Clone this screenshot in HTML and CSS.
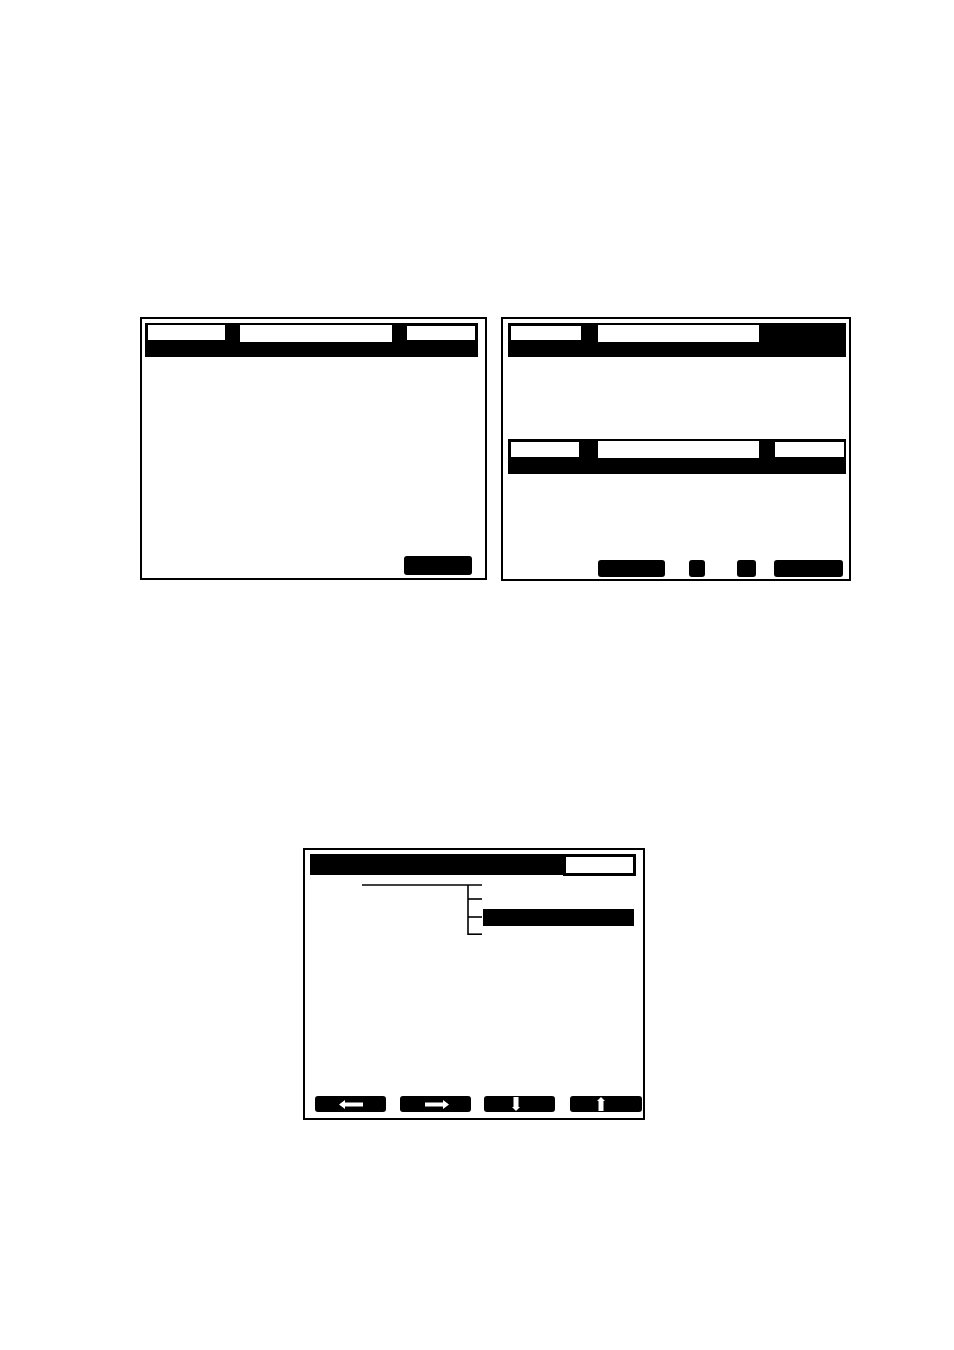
FILE: index.html
```html
<!DOCTYPE html>
<html>
<head>
<meta charset="utf-8">
<title>Screens</title>
<link rel="stylesheet" href="styles.css">
</head>
<body>
<div class="page">
  <div class="top-row">
    <div class="panel panel-a">
      <div class="hdr hdr-a">
        <div class="hrow">
          <div class="wbox a1"></div>
          <div class="wbox a2"></div>
          <div class="wbox a3"></div>
        </div>
      </div>
      <div class="foot foot-a">
        <div class="btn btn-a"></div>
      </div>
    </div>
    <div class="panel panel-b">
      <div class="hdr hdr-b1">
        <div class="hrow">
          <div class="wbox b1"></div>
          <div class="wbox b2"></div>
        </div>
      </div>
      <div class="hdr hdr-b2">
        <div class="hrow">
          <div class="wbox c1"></div>
          <div class="wbox c2"></div>
          <div class="wbox c3"></div>
        </div>
      </div>
      <div class="foot foot-b">
        <div class="btn bb1"></div>
        <div class="btn bb2"></div>
        <div class="btn bb3"></div>
        <div class="btn bb4"></div>
      </div>
    </div>
  </div>

  <div class="panel panel-c">
    <div class="hdr-c">
      <div class="bar-c"></div>
      <div class="box-c"></div>
    </div>
    <div class="tree">
      <svg class="tree-lines" width="121" height="52" viewBox="0 0 121 52">
        <g stroke="#000" stroke-width="1.6" fill="none">
          <line x1="0" y1="1" x2="120" y2="1"/>
          <line x1="106" y1="1" x2="106" y2="51"/>
          <line x1="106" y1="15" x2="120" y2="15"/>
          <line x1="106" y1="33" x2="120" y2="33"/>
          <line x1="106" y1="50.2" x2="120" y2="50.2"/>
        </g>
      </svg>
      <div class="sel"></div>
    </div>
    <div class="foot foot-c">
      <div class="btn cb cb1">
        <svg width="24" height="9" viewBox="0 0 24 9"><polygon points="0,4.5 6,0 6,2.5 24,2.5 24,6.5 6,6.5 6,9" fill="#fff"/></svg>
      </div>
      <div class="btn cb cb2">
        <svg width="24" height="9" viewBox="0 0 24 9"><polygon points="24,4.5 18,0 18,2.5 0,2.5 0,6.5 18,6.5 18,9" fill="#fff"/></svg>
      </div>
      <div class="btn cb cb3">
        <svg width="8" height="14" viewBox="0 0 8 14"><polygon points="1.5,0 6.5,0 6.5,10 8,10 4,14 0,10 1.5,10" fill="#fff"/></svg>
      </div>
      <div class="btn cb cb4">
        <svg width="8" height="14" viewBox="0 0 8 14"><polygon points="4,0 8,4 6.5,4 6.5,14 1.5,14 1.5,4 0,4" fill="#fff"/></svg>
      </div>
    </div>
  </div>
</div>
</body>
</html>
```

FILE: styles.css
```css
* { box-sizing: border-box; }

html, body {
  margin: 0;
  padding: 0;
  background: #fff;
  font-family: "Liberation Sans", Arial, sans-serif;
}

.page {
  width: 954px;
  height: 1350px;
  padding-top: 317px;
}

.top-row {
  display: flex;
  margin-left: 140px;
  gap: 14px;
}

.panel {
  border: 2px solid #000;
  background: #fff;
  display: flex;
  flex-direction: column;
}

/* ---- Panel A ---- */
.panel-a {
  width: 347px;
  height: 263px;
  padding: 4px 7px 3px 3px;
}

.hdr {
  background: #000;
}

.hrow {
  display: flex;
  align-items: flex-start;
}

.wbox {
  background: #fff;
  flex: none;
}

.hdr-a { height: 34px; }
.hdr-a .hrow { height: 19px; }
.a1 { margin-left: 3px; margin-top: 2px; width: 77px; height: 15px; }
.a2 { margin-left: 15px; margin-top: 2px; width: 152px; height: 17px; }
.a3 { margin-left: 15px; margin-top: 3px; width: 68px; height: 14px; }

.foot {
  margin-top: auto;
  display: flex;
  justify-content: flex-end;
  align-items: flex-end;
}

.btn {
  background: #000;
  border-radius: 3px;
  flex: none;
}

.btn-a {
  width: 68px;
  height: 19px;
  margin-right: 6px;
}

/* ---- Panel B ---- */
.panel-b {
  width: 350px;
  height: 264px;
  padding: 4px 3px 2px 5px;
}

.hdr-b1 { height: 34px; }
.hdr-b1 .hrow { height: 19px; }
.b1 { margin-left: 3px; margin-top: 3px; width: 70px; height: 14px; }
.b2 { margin-left: 17px; margin-top: 2px; width: 161px; height: 17px; }

.hdr-b2 { height: 35px; margin-top: 82px; }
.hdr-b2 .hrow { height: 19px; }
.c1 { margin-left: 3px; margin-top: 3px; width: 68px; height: 15px; }
.c2 { margin-left: 19px; margin-top: 2px; width: 161px; height: 17px; }
.c3 { margin-left: 16px; margin-top: 3px; width: 69px; height: 15px; }

.foot-b { padding-right: 3px; }
.bb1 { width: 67px; height: 17px; }
.bb2 { width: 16px; height: 17px; margin-left: 24px; }
.bb3 { width: 19px; height: 17px; margin-left: 32px; }
.bb4 { width: 69px; height: 17px; margin-left: 18px; }

/* ---- Panel C ---- */
.panel-c {
  margin-top: 267px;
  margin-left: 303px;
  width: 342px;
  height: 272px;
  padding: 4px 1px 6px 5px;
}

.hdr-c {
  display: flex;
  align-items: flex-start;
  margin-right: 6px;
  height: 22px;
}

.bar-c {
  flex: 1;
  height: 21px;
  background: #000;
}

.box-c {
  width: 73px;
  height: 22px;
  border: 3px solid #000;
  background: #fff;
  flex: none;
}

.tree {
  display: flex;
  align-items: flex-start;
  margin-top: 8px;
  margin-left: 52px;
}

.tree-lines { display: block; flex: none; }

.sel {
  width: 151px;
  height: 17px;
  margin-top: 25px;
  background: #000;
  flex: none;
}

.foot-c {
  justify-content: flex-start;
  padding-left: 5px;
}

.cb {
  height: 16px;
  width: 71px;
  display: flex;
  align-items: center;
  justify-content: center;
}

.cb svg { display: block; }
.cb2 { margin-left: 14px; }
.cb3 { margin-left: 13px; }
.cb4 { margin-left: 15px; width: 72px; }
.cb1 svg { margin-left: 0; }
.cb2 svg { margin-left: 2px; }
.cb3 svg { margin-left: -8px; }
.cb4 svg { margin-left: -10px; }
```
